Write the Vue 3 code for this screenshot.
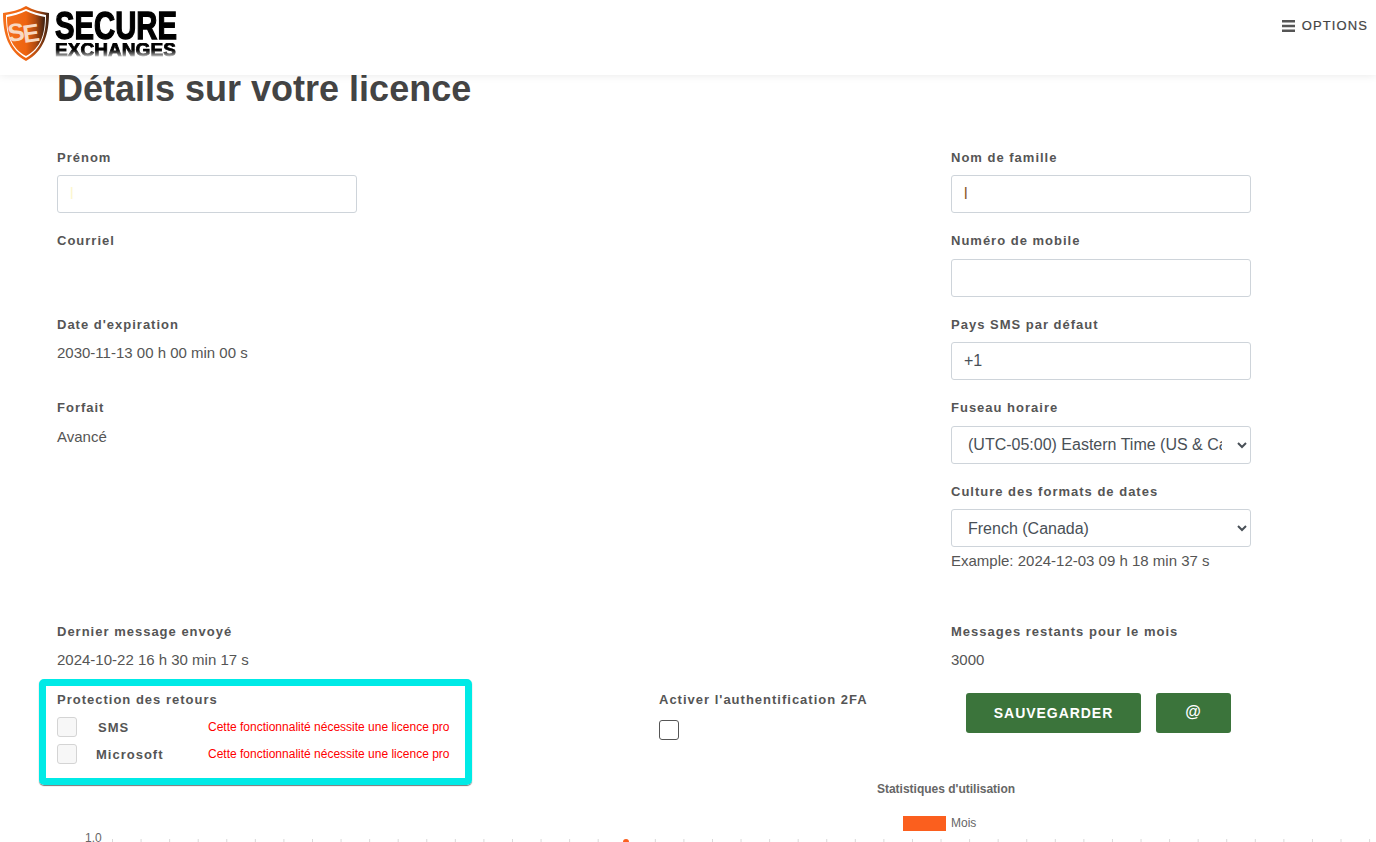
<script setup>
const ticks = Array.from({ length: 45 }, (_, i) => 112.5 + i * 28.57)
</script>

<template>
  <div class="page">
    <header class="topbar">
      <div class="logo">
        <svg class="shield" viewBox="0 0 48 57" width="48" height="57">
          <defs>
            <linearGradient id="sg" x1="0" x2="1" y1="0" y2="0">
              <stop offset="0" stop-color="#f4701c" />
              <stop offset="0.5" stop-color="#ee6410" />
              <stop offset="0.75" stop-color="#b04a10" />
              <stop offset="1" stop-color="#3a2012" />
            </linearGradient>
          </defs>
          <path d="M24 1 C31 5 39 7 47 8 C47 29 42 46 24 56 C6 46 1 29 1 8 C9 7 17 5 24 1 Z" fill="url(#sg)" />
          <path d="M24 4 C30 7 38 9 44 10 C44 29 40 44 24 53 C8 44 4 29 4 10 C10 9 18 7 24 4 Z" fill="#fff" />
          <path d="M24 6 C30 9 37 11 43 12 C43 29 39 43 24 51 C9 43 5 29 5 12 C11 11 18 9 24 6 Z" fill="url(#sg)" />
          <text class="shield-s" x="6" y="36" transform="rotate(-8 14 30)">S</text>
          <text class="shield-e" x="21" y="37" transform="rotate(-8 28 30)">E</text>
        </svg>
        <div class="wordmark">
          <span class="w1">SECURE</span>
          <span class="w2">EXCHANGES</span>
        </div>
      </div>
      <div class="options">
        <svg width="13" height="12" viewBox="0 0 13 12"><path d="M0 0h13v2.4H0zM0 4.8h13v2.4H0zM0 9.6h13V12H0z" fill="#555" /></svg>
        <span>OPTIONS</span>
      </div>
    </header>

    <main class="content">
      <h1>Détails sur votre licence</h1>

      <div class="form">
        <div class="field">
          <label>Prénom</label>
          <input class="ctl faint" type="text" value="l" />
        </div>
        <div class="field">
          <label>Nom de famille</label>
          <input class="ctl tan" type="text" value="l" />
        </div>

        <div class="field">
          <label>Courriel</label>
        </div>
        <div class="field">
          <label>Numéro de mobile</label>
          <input class="ctl" type="text" />
        </div>

        <div class="field">
          <label>Date d'expiration</label>
          <p class="val">2030-11-13 00 h 00 min 00 s</p>
        </div>
        <div class="field">
          <label>Pays SMS par défaut</label>
          <input class="ctl" type="text" value="+1" />
        </div>

        <div class="field">
          <label>Forfait</label>
          <p class="val">Avancé</p>
        </div>
        <div class="field">
          <label>Fuseau horaire</label>
          <select class="ctl">
            <option>(UTC-05:00) Eastern Time (US &amp; Canada)</option>
          </select>
        </div>

        <div class="field"></div>
        <div class="field tall">
          <label>Culture des formats de dates</label>
          <select class="ctl">
            <option>French (Canada)</option>
          </select>
          <p class="example">Example: 2024-12-03 09 h 18 min 37 s</p>
        </div>

        <div class="field short">
          <label>Dernier message envoyé</label>
          <p class="val">2024-10-22 16 h 30 min 17 s</p>
        </div>
        <div class="field short">
          <label>Messages restants pour le mois</label>
          <p class="val">3000</p>
        </div>
      </div>

      <div class="lower">
        <div class="protect">
          <div class="protect-title">Protection des retours</div>
          <div class="prot-rows">
            <div class="prot-row">
              <span class="fake-check"></span>
              <b class="prot-name sms">SMS</b>
              <span class="warn">Cette fonctionnalité nécessite une licence pro</span>
            </div>
            <div class="prot-row">
              <span class="fake-check"></span>
              <b class="prot-name ms">Microsoft</b>
              <span class="warn">Cette fonctionnalité nécessite une licence pro</span>
            </div>
          </div>
        </div>
        <div class="twofa">
          <label>Activer l'authentification 2FA</label>
          <span class="check"></span>
        </div>
        <div class="actions">
          <button class="btn save">SAUVEGARDER</button>
          <button class="btn at">@</button>
        </div>
      </div>
    </main>

    <section class="chart">
      <div class="chart-title">Statistiques d'utilisation</div>
      <div class="legend"><span class="swatch"></span><span>Mois</span></div>
      <div class="plot">
        <span class="ylabel">1.0</span>
        <svg class="ticks" width="1376" height="12" viewBox="0 0 1376 12">
          <line v-for="t in ticks" :key="t" :x1="t" :x2="t" y1="8" y2="12" stroke="#d9d9d9" />
          <circle cx="626" cy="11" r="3" fill="#fb5f1e" />
        </svg>
      </div>
    </section>
  </div>
</template>

<style>
html, body { margin: 0; background: #fff; overflow: hidden; }
</style>

<style scoped>
.page {
  width: 1376px;
  height: 842px;
  overflow: hidden;
  font-family: "Liberation Sans", Arial, sans-serif;
  color: #495057;
  background: #fff;
}
.topbar {
  position: relative;
  z-index: 2;
  height: 75px;
  box-sizing: border-box;
  background: #fff;
  box-shadow: 0 1px 8px rgba(0, 0, 0, 0.08);
  display: flex;
  justify-content: space-between;
  align-items: flex-start;
  padding: 5px 8px 0 2px;
}
.logo { display: flex; align-items: flex-start; gap: 5px; }
.shield { flex: none; }
.shield-s, .shield-e {
  font-family: "Liberation Sans", Arial, sans-serif;
  font-weight: 700;
  font-size: 25px;
  fill: #f8d9c2;
}
.wordmark {
  display: flex;
  flex-direction: column;
  align-items: flex-start;
  color: #000;
  font-weight: 700;
  width: 120px;
  margin-top: 7px;
}
.w1 {
  font-size: 39px;
  line-height: 28px;
  width: max-content;
  -webkit-text-stroke: 1.4px #000;
  transform: scaleX(0.75);
  transform-origin: left center;
  white-space: nowrap;
}
.w2 {
  font-size: 18px;
  line-height: 15px;
  width: max-content;
  margin-top: 3px;
  white-space: nowrap;
  -webkit-text-stroke: 0.8px #000;
  transform: scaleX(1.06);
  transform-origin: left center;
  -webkit-mask-image: linear-gradient(#000 45%, rgba(0, 0, 0, 0.55) 75%, transparent 100%);
  mask-image: linear-gradient(#000 45%, rgba(0, 0, 0, 0.55) 75%, transparent 100%);
}
.options {
  display: flex;
  align-items: center;
  gap: 7px;
  margin-top: 13px;
  font-size: 13px;
  line-height: 15px;
  letter-spacing: 1.1px;
  color: #444;
  -webkit-text-stroke: 0.2px #444;
}
.content { padding: 0 0 0 57px; position: relative; }
h1 {
  margin: -8px 0 0;
  font-size: 36px;
  line-height: 43px;
  font-weight: 700;
  color: #444;
}
.form {
  display: grid;
  grid-template-columns: 894px 300px;
  grid-auto-rows: 83.5px;
  margin-top: 37.7px;
}
.field { display: flex; flex-direction: column; align-items: flex-start; }
.field label, .twofa label, .protect-title {
  display: block;
  font-size: 13px;
  line-height: 20px;
  font-weight: 700;
  letter-spacing: 1px;
  color: #555;
}
.ctl {
  box-sizing: border-box;
  width: 300px;
  height: 38px;
  margin-top: 7.5px;
  padding: 6px 12px;
  border: 1px solid #ced4da;
  border-radius: 3px;
  background: #fff;
  color: #495057;
  font: 16px/24px "Liberation Sans", Arial, sans-serif;
}
.faint { color: #fdf7cf; }
.tan { color: #8a5a2a; }
.val {
  margin: 7.5px 0 0;
  font-size: 15px;
  line-height: 22px;
  color: #555;
}
.example {
  margin: 4.8px 0 0;
  font-size: 15px;
  line-height: 18px;
  color: #555;
}
.tall { height: 140px; }
.short { margin-top: 56.5px; }
.lower { display: flex; align-items: flex-start; margin-top: 41.3px; height: 92px; }
.protect {
  position: relative;
  width: 392px;
  flex: none;
  height: 92px;
  box-sizing: border-box;
}
.protect::before {
  content: "";
  position: absolute;
  left: -18px;
  top: -11px;
  width: 433px;
  height: 106px;
  box-sizing: border-box;
  border: 7px solid #00eae6;
  border-radius: 5px;
  box-shadow: 0 1px 1px #777;
}
.protect-title { position: relative; }
.prot-rows { position: relative; margin-top: 4px; }
.prot-row {
  display: flex;
  align-items: center;
  height: 27px;
}
.fake-check {
  flex: none;
  width: 18px;
  height: 18px;
  border: 1px solid #d4d4d4;
  border-radius: 3px;
  background: #f7f7f7;
}
.prot-name {
  flex: none;
  width: 131px;
  font-size: 13px;
  letter-spacing: 1px;
  color: #555;
  box-sizing: border-box;
}
.sms { padding-left: 21px; }
.ms { padding-left: 19px; }
.warn { font-size: 12px; color: #f00; white-space: nowrap; }
.twofa { margin-left: 210px; width: 307px; flex: none; }
.check {
  display: block;
  box-sizing: border-box;
  width: 20px;
  height: 20px;
  margin-top: 10px;
  border: 1px solid #555;
  border-radius: 3px;
  background: #fff;
}
.actions { display: flex; gap: 15px; margin-top: 3px; }
.btn {
  height: 40px;
  border: 0;
  border-radius: 3px;
  background: #3b743b;
  color: #fff;
  font: 700 14px "Liberation Sans", Arial, sans-serif;
  letter-spacing: 0.96px;
  padding: 0;
}
.save { width: 175px; }
.at { width: 75px; font-size: 16px; padding-bottom: 2px; }
.chart { position: relative; height: 60px; }
.chart-title {
  text-align: center;
  padding-left: 516px;
  box-sizing: border-box;
  width: 1376px;
  font-size: 12px;
  line-height: 14px;
  font-weight: 700;
  color: #666;
}
.legend {
  display: flex;
  align-items: center;
  gap: 5px;
  margin: 20px 0 0 903px;
  font-size: 12px;
  line-height: 15px;
  color: #666;
}
.swatch { width: 43px; height: 15px; background: #fb5f1e; }
.plot { position: relative; height: 11px; }
.ylabel {
  position: absolute;
  left: 85px;
  top: 2.5px;
  font-size: 12px;
  line-height: 10px;
  color: #666;
}
.ticks { position: absolute; left: 0; top: 0; }
</style>
